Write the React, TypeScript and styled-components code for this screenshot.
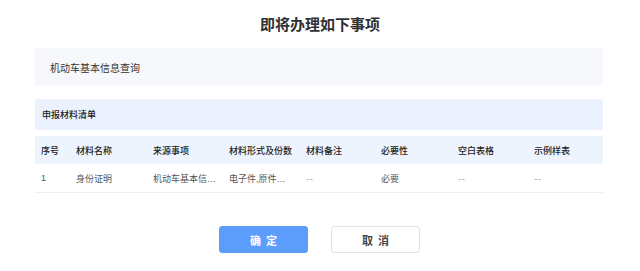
import React from "react";
import styled, { createGlobalStyle } from "styled-components";

const Global = createGlobalStyle`
  html, body { margin: 0; padding: 0; background: #fff; }
  body { font-family: "Liberation Sans", "Noto Sans CJK SC", sans-serif; color: #333; }
`;

const Page = styled.div`
  width: 640px;
  height: 271px;
  box-sizing: border-box;
  padding: 14px 37px 0 35px;
  display: flex;
  flex-direction: column;
`;

const Title = styled.h1`
  margin: 0;
  font-size: 15px;
  line-height: 22px;
  font-weight: 700;
  color: #303133;
  text-align: center;
  padding-left: 2px;
`;

const InfoBox = styled.div`
  margin-top: 12px;
  height: 38px;
  background: #f7f8fc;
  border-radius: 3px;
  display: flex;
  align-items: center;
  padding-left: 15px;
  font-size: 10px;
  color: #333;
`;

const SectionTitle = styled.div`
  margin-top: 13px;
  height: 31px;
  background: #ebf2fe;
  border-radius: 2px;
  display: flex;
  align-items: center;
  padding-left: 7px;
  font-size: 9px;
  font-weight: 500;
  color: #222;
`;

const cols = "35px 77px 76px 77px 75px 77px 76px 75px";

const HeaderRow = styled.div`
  margin-top: 6px;
  height: 28px;
  background: #eef4fe;
  display: grid;
  grid-template-columns: ${cols};
  align-items: center;
`;

const DataRow = styled.div`
  height: 28px;
  border-bottom: 1px solid #eef0f3;
  display: grid;
  grid-template-columns: ${cols};
  align-items: center;
`;

const Cell = styled.div<{ $head?: boolean; $muted?: boolean }>`
  padding: 0 6px;
  font-size: ${(p) => (p.$muted ? "10px" : "9px")};
  font-weight: ${(p) => (p.$head ? 500 : 400)};
  color: ${(p) => (p.$muted ? "#b0b4bb" : p.$head ? "#222" : "#555")};
  letter-spacing: ${(p) => (p.$muted ? "0.5px" : "0")};
  white-space: nowrap;
  overflow: hidden;
  text-overflow: ellipsis;
  min-width: 0;
`;

const Buttons = styled.div`
  margin-top: 33px;
  display: flex;
  justify-content: center;
  gap: 23px;
  padding-left: 1px;
`;

const Button = styled.button<{ $primary?: boolean }>`
  width: 89px;
  height: 27px;
  box-sizing: border-box;
  border-radius: 3px;
  border: 1px solid ${(p) => (p.$primary ? "#5c9dfc" : "#dfe2e8")};
  background: ${(p) => (p.$primary ? "#5c9dfc" : "#fff")};
  color: ${(p) => (p.$primary ? "#fff" : "#444")};
  font-family: "Noto Sans CJK SC", sans-serif;
  font-size: 11px;
  font-weight: 700;
  letter-spacing: 5px;
  text-indent: 5px;
  padding: 0;
  cursor: pointer;
`;

const headers = ["序号", "材料名称", "来源事项", "材料形式及份数", "材料备注", "必要性", "空白表格", "示例样表"];
const row = ["1", "身份证明", "机动车基本信息查询", "电子件,原件一份", "--", "必要", "--", "--"];

export default function App() {
  return (
    <>
      <Global />
      <Page>
        <Title>即将办理如下事项</Title>
        <InfoBox>机动车基本信息查询</InfoBox>
        <SectionTitle>申报材料清单</SectionTitle>
        <HeaderRow>
          {headers.map((h) => (
            <Cell key={h} $head>{h}</Cell>
          ))}
        </HeaderRow>
        <DataRow>
          {row.map((v, i) => (
            <Cell key={i} $muted={v === "--"}>{v}</Cell>
          ))}
        </DataRow>
        <Buttons>
          <Button $primary>确定</Button>
          <Button>取消</Button>
        </Buttons>
      </Page>
    </>
  );
}
